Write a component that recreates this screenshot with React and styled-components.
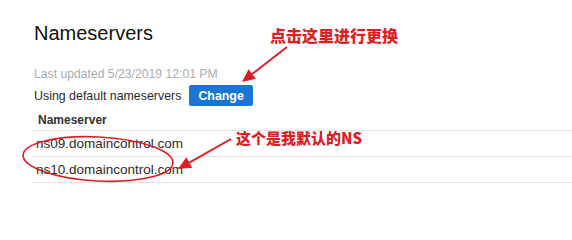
import React from "react"
import styled, { createGlobalStyle } from "styled-components"

const GlobalStyle = createGlobalStyle`
  html, body {
    margin: 0;
    padding: 0;
    background: #fff;
  }
  body {
    font-family: "Liberation Sans", Arial, sans-serif;
    color: #2b2b2b;
  }
`

const colors = {
  text: "#2b2b2b",
  muted: "#a9adb2",
  line: "#e4e4e4",
  blue: "#1a76d2",
  red: "#dc1f26",
}

const Page = styled.div`
  position: relative;
  width: 572px;
  height: 202px;
  overflow: hidden;
  background: #fff;
`

const Panel = styled.section`
  padding: 21px 0 0 34px;
`

const Title = styled.h2`
  margin: 0;
  font-size: 20px;
  font-weight: 400;
  line-height: 24px;
  color: #111;
`

const Updated = styled.p`
  margin: 21px 0 0;
  font-size: 12.2px;
  line-height: 16px;
  color: ${colors.muted};
`

const StatusRow = styled.div`
  display: flex;
  align-items: center;
  gap: 8px;
  margin-top: 3px;
  height: 21px;
`

const Status = styled.span`
  font-size: 12.4px;
  color: ${colors.text};
`

const Button = styled.button`
  height: 21px;
  padding: 0 9px;
  border: 0;
  border-radius: 2px;
  background: ${colors.blue};
  color: #fff;
  font-family: inherit;
  font-size: 12.4px;
  font-weight: 700;
  cursor: pointer;
`

const Table = styled.div`
  margin-left: -2px;
`

const HeadCell = styled.div`
  height: 17px;
  padding: 7px 0 0 6px;
  font-size: 12px;
  line-height: 14px;
  font-weight: 700;
  color: #333;
  border-bottom: 1px solid ${colors.line};
`

const Row = styled.div`
  height: 25px;
  padding-left: 4px;
  display: flex;
  align-items: center;
  font-size: 13.5px;
  color: ${colors.text};
  border-bottom: 1px solid ${colors.line};
`

const Note = styled.span`
  position: absolute;
  left: ${(p) => p.x}px;
  top: ${(p) => p.y}px;
  font-family: "Noto Sans CJK SC", "Liberation Sans", sans-serif;
  font-size: ${(p) => p.size}px;
  font-weight: 900;
  line-height: 1;
  color: ${colors.red};
  white-space: nowrap;
`

const Marks = styled.svg`
  position: absolute;
  inset: 0;
  pointer-events: none;
`

const Arrow = ({ x1, y1, x2, y2 }) => {
  const a = Math.atan2(y2 - y1, x2 - x1)
  const len = 13
  const w = 6
  const bx = x2 - Math.cos(a) * len
  const by = y2 - Math.sin(a) * len
  const px = -Math.sin(a) * w
  const py = Math.cos(a) * w
  return (
    <g fill={colors.red} stroke={colors.red}>
      <line x1={x1} y1={y1} x2={bx} y2={by} strokeWidth="2" />
      <polygon
        stroke="none"
        points={`${x2},${y2} ${bx + px},${by + py} ${bx - px},${by - py}`}
      />
    </g>
  )
}

const servers = ["ns09.domaincontrol.com", "ns10.domaincontrol.com"]

export default function App() {
  return (
    <Page>
      <GlobalStyle />
      <Panel>
        <Title>Nameservers</Title>
        <Updated>Last updated 5/23/2019 12:01 PM</Updated>
        <StatusRow>
          <Status>Using default nameservers</Status>
          <Button>Change</Button>
        </StatusRow>
        <Table>
          <HeadCell>Nameserver</HeadCell>
          {servers.map((s) => (
            <Row key={s}>{s}</Row>
          ))}
        </Table>
      </Panel>

      <Note x={270} y={27} size={16}>点击这里进行更换</Note>
      <Note x={236} y={130} size={15}>这个是我默认的NS</Note>

      <Marks width="572" height="202" viewBox="0 0 572 202">
        <Arrow x1={287} y1={47} x2={242} y2={82} />
        <Arrow x1={231} y1={139} x2={178} y2={169} />
        <ellipse
          cx="98"
          cy="159"
          rx="75"
          ry="22"
          fill="none"
          stroke={colors.red}
          strokeWidth="1.6"
          transform="rotate(3 98 159)"
        />
      </Marks>
    </Page>
  )
}
